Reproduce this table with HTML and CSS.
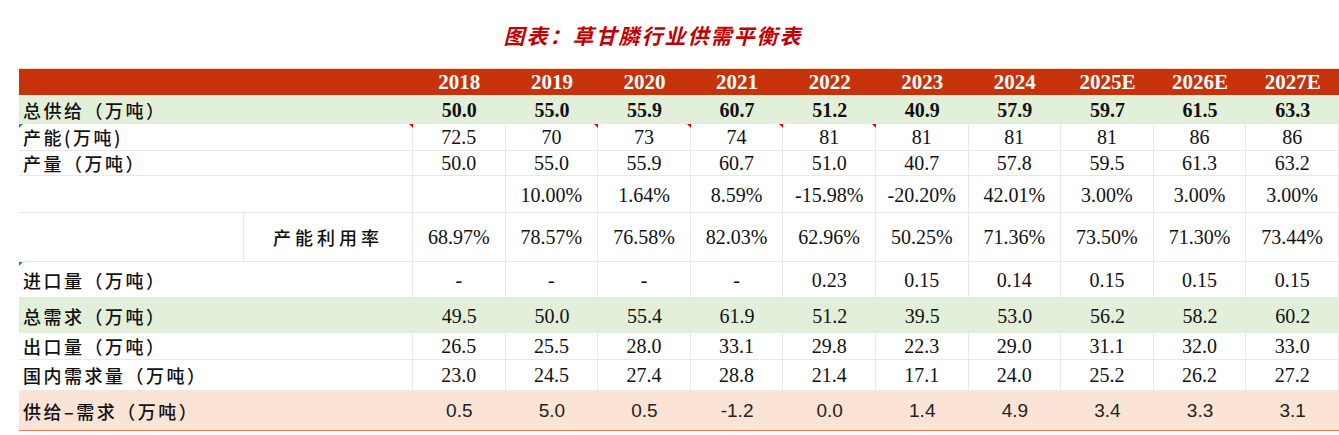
FILE: index.html
```html
<!DOCTYPE html>
<html lang="zh-CN">
<head>
<meta charset="utf-8">
<title>草甘膦行业供需平衡表</title>
<link rel="stylesheet" href="styles.css">
</head>
<body>
<div class="page">
  <h1 class="title">图表：草甘膦行业供需平衡表</h1>
  <table class="sheet">
    <colgroup>
      <col class="c-lab1"><col class="c-lab2">
      <col class="c-num"><col class="c-num"><col class="c-num"><col class="c-num"><col class="c-num">
      <col class="c-num"><col class="c-num"><col class="c-num"><col class="c-num"><col class="c-num">
    </colgroup>
    <thead>
      <tr class="r-head">
        <th colspan="2"></th>
        <th>2018</th><th>2019</th><th>2020</th><th>2021</th><th>2022</th>
        <th>2023</th><th>2024</th><th>2025E</th><th>2026E</th><th>2027E</th>
      </tr>
    </thead>
    <tbody>
      <tr class="r-green r-bold r-h28">
        <td class="lab" colspan="2">总供给（万吨）</td>
        <td>50.0</td><td>55.0</td><td>55.9</td><td>60.7</td><td>51.2</td>
        <td>40.9</td><td>57.9</td><td>59.7</td><td>61.5</td><td>63.3</td>
      </tr>
      <tr class="r-white r-h27">
        <td class="lab mark-g mark-r" colspan="2">产能(万吨)</td>
        <td>72.5</td><td class="mark-r">70</td><td class="mark-r">73</td><td class="mark-r">74</td><td class="mark-r">81</td>
        <td>81</td><td>81</td><td>81</td><td>86</td><td>86</td>
      </tr>
      <tr class="r-white r-h25">
        <td class="lab" colspan="2">产量（万吨）</td>
        <td>50.0</td><td>55.0</td><td>55.9</td><td>60.7</td><td>51.0</td>
        <td>40.7</td><td>57.8</td><td>59.5</td><td>61.3</td><td>63.2</td>
      </tr>
      <tr class="r-white r-h37 r-low">
        <td class="lab" colspan="2"></td>
        <td></td><td>10.00%</td><td>1.64%</td><td>8.59%</td><td>-15.98%</td>
        <td>-20.20%</td><td>42.01%</td><td>3.00%</td><td>3.00%</td><td>3.00%</td>
      </tr>
      <tr class="r-white r-h49">
        <td class="lab"></td>
        <td class="lab sub">产能利用率</td>
        <td>68.97%</td><td>78.57%</td><td>76.58%</td><td>82.03%</td><td>62.96%</td>
        <td>50.25%</td><td>71.36%</td><td>73.50%</td><td>71.30%</td><td>73.44%</td>
      </tr>
      <tr class="r-white r-h36">
        <td class="lab mark-g" colspan="2">进口量（万吨）</td>
        <td>-</td><td>-</td><td>-</td><td>-</td><td>0.23</td>
        <td>0.15</td><td>0.14</td><td>0.15</td><td>0.15</td><td>0.15</td>
      </tr>
      <tr class="r-green r-h35">
        <td class="lab" colspan="2">总需求（万吨）</td>
        <td>49.5</td><td>50.0</td><td>55.4</td><td>61.9</td><td>51.2</td>
        <td>39.5</td><td>53.0</td><td>56.2</td><td>58.2</td><td>60.2</td>
      </tr>
      <tr class="r-white r-h27">
        <td class="lab" colspan="2">出口量（万吨）</td>
        <td>26.5</td><td>25.5</td><td>28.0</td><td>33.1</td><td>29.8</td>
        <td>22.3</td><td>29.0</td><td>31.1</td><td>32.0</td><td>33.0</td>
      </tr>
      <tr class="r-white r-h31">
        <td class="lab" colspan="2">国内需求量（万吨）</td>
        <td>23.0</td><td>24.5</td><td>27.4</td><td>28.8</td><td>21.4</td>
        <td>17.1</td><td>24.0</td><td>25.2</td><td>26.2</td><td>27.2</td>
      </tr>
      <tr class="r-peach r-h40">
        <td class="lab" colspan="2">供给–需求（万吨）</td>
        <td>0.5</td><td>5.0</td><td>0.5</td><td>-1.2</td><td>0.0</td>
        <td>1.4</td><td>4.9</td><td>3.4</td><td>3.3</td><td>3.1</td>
      </tr>
    </tbody>
  </table>
</div>
</body>
</html>
```

FILE: styles.css
```css
html, body {
  margin: 0;
  padding: 0;
  background: #ffffff;
}

.page {
  width: 1339px;
  height: 435px;
  overflow: hidden;
}

.title {
  margin: 0;
  height: 68px;
  box-sizing: border-box;
  padding: 20px 33px 0 0;
  text-align: center;
  font-family: "Noto Sans CJK SC", sans-serif;
  font-size: 21px;
  line-height: 30px;
  font-weight: 700;
  font-style: italic;
  letter-spacing: 2px;
  color: #c00000;
}

.sheet {
  margin-left: 19px;
  width: 1320px;
  table-layout: fixed;
  border-collapse: separate;
  border-spacing: 0;
  font-family: "Liberation Serif", "Times New Roman", serif;
  font-size: 20px;
  color: #111111;
}

.c-lab1 { width: 225px; }
.c-lab2 { width: 169px; }
.c-num { width: 92.6px; }

.sheet th,
.sheet td {
  padding: 0;
  text-align: center;
  vertical-align: middle;
  box-sizing: border-box;
  white-space: nowrap;
  position: relative;
  line-height: 22px;
}

.r-head th {
  height: 28px;
  background: #c6330a;
  color: #ffffff;
  font-weight: 700;
  font-size: 21px;
  border-top: 1px solid #f0d8cf;
  border-bottom: 1px solid #f3e6df;
}

.r-white td {
  background: #ffffff;
  border-right: 1px solid #e8e8e8;
  border-bottom: 1px solid #e8e8e8;
}

.r-low td {
  padding-top: 2px;
}

.r-green td {
  background: #e2efd9;
}

.r-peach td {
  background: #fbe4d5;
  font-family: "Liberation Sans", Arial, sans-serif;
  font-size: 19px;
  color: #222222;
  border-bottom: 1px solid #e27a5e;
}

.r-bold td {
  font-weight: 700;
}

.sheet td.lab {
  text-align: left;
  padding-left: 4px;
  font-family: "Noto Sans CJK SC", sans-serif;
  font-size: 18px;
  font-weight: 500;
  letter-spacing: 2.5px;
  color: #111111;
}

.sheet td.lab.sub {
  text-align: center;
  padding-left: 0;
  letter-spacing: 4px;
}

.r-h25 td { height: 25px; }
.r-h27 td { height: 27px; }
.r-h28 td { height: 28px; }
.r-h31 td { height: 31px; }
.r-h35 td { height: 35px; }
.r-h36 td { height: 36px; }
.r-h37 td { height: 37px; }
.r-h40 td { height: 40px; }
.r-h49 td { height: 49px; }

/* comment markers in corners of cells */
.mark-r::after {
  content: "";
  position: absolute;
  top: 0;
  right: -1px;
  width: 0;
  height: 0;
  border-top: 4px solid #e60000;
  border-left: 4px solid transparent;
}

.mark-g::before {
  content: "";
  position: absolute;
  top: 0;
  left: 0;
  width: 0;
  height: 0;
  border-top: 4px solid #1f9a3a;
  border-right: 4px solid transparent;
}
```
